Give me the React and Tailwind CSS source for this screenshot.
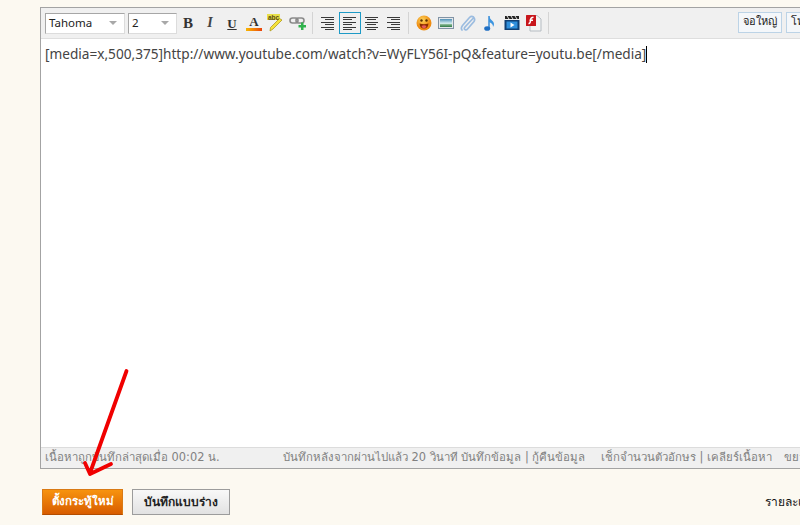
const F = { fontFamily: '"DejaVu Sans", "Noto Sans", sans-serif' };
const S = { fontFamily: '"Liberation Serif", serif' };
const N = { fontFamily: '"Noto Sans", "DejaVu Sans", sans-serif' };

function Cell({ children, active }) {
  return (
    <div className={`w-[22px] h-[22px] shrink-0 flex items-center justify-center ${active ? "border border-[#1e9ac6]" : ""}`}>
      {children}
    </div>
  );
}
const Sep = () => <div className="w-px h-[22px] bg-[#d4d4d4] mx-[3px] shrink-0" />;

function Align({ mode }) {
  return (
    <svg width="14" height="14" viewBox="0 0 14 14">
      {[1, 3, 6, 8, 11, 13].map((y, i) => {
        const w = i % 2 ? 9 : 13;
        const x = mode === "left" ? 0 : mode === "center" ? Math.floor((14 - w) / 2) : 13 - w;
        return <rect key={y} x={x} y={y} width={w} height="1" fill="#3a3a3a" />;
      })}
    </svg>
  );
}

function Select({ w, label }) {
  return (
    <div style={N} className={`${w} h-[21px] bg-white border border-[#a6a6a6] border-r-[#dcdcdc] border-b-[#dcdcdc] flex items-center justify-between pl-[3px] pr-[7px] text-[11.5px] text-[#222] shrink-0`}>
      <span>{label}</span>
      <span className="w-0 h-0 border-x-[4px] border-x-transparent border-t-[4px] border-t-[#a8a8a8]" />
    </div>
  );
}

export default function App() {
  return (
    <div style={F} className="relative w-[800px] h-[525px] overflow-hidden bg-[#fcf9f1]">
      <div className="w-[800px] pl-10 pt-[7px]">
        <div className="w-[800px] h-[462px] flex flex-col border-t border-l border-b border-[#a3a3a3]">
          <div className="h-[31px] shrink-0 bg-[#f0f0f0] border-b border-[#dedede] flex items-center pl-1 relative">
            <div className="flex items-center gap-[3px] shrink-0">
              <Select w="w-[80px]" label="Tahoma" />
              <Select w="w-[49px]" label="2" />
            </div>
            <div className="flex items-center shrink-0">
              <Cell><span style={S} className="text-[15px] font-bold leading-none text-[#333]">B</span></Cell>
              <Cell><span style={S} className="text-[14px] italic font-bold leading-none text-[#444]">I</span></Cell>
              <Cell><span style={S} className="text-[13px] font-bold underline leading-none text-[#333]">U</span></Cell>
              <Cell>
                <div className="flex flex-col items-center">
                  <span style={S} className="text-[13px] font-bold leading-[11px] text-[#333]">A</span>
                  <span className="w-4 h-[3px] mt-px bg-gradient-to-r from-[#f7b500] to-[#e8400c]" />
                </div>
              </Cell>
              <Cell>
                <svg width="18" height="18" viewBox="0 0 18 18">
                  <rect x="0" y="0" width="13" height="6" fill="#e8e04a" />
                  <path d="M15 6 L6 15 L3 17 L3.5 13.5 L12.5 4.5 Z" fill="#f5e23a" stroke="#b09b20" strokeWidth="0.8" />
                  <text x="1" y="5.5" fontSize="6.5" fontWeight="bold" fill="#5a4b10" fontFamily="Liberation Sans">abc</text>
                </svg>
              </Cell>
              <Cell>
                <svg width="18" height="14" viewBox="0 0 18 14">
                  <rect x="1" y="2" width="8" height="5" rx="2.5" fill="none" stroke="#8a8a8a" strokeWidth="1.6" />
                  <rect x="7" y="2" width="8" height="5" rx="2.5" fill="none" stroke="#8a8a8a" strokeWidth="1.6" />
                  <path d="M12 6.5h2.5V9H17v2.5h-2.5V14H12v-2.5H9.5V9H12z" fill="#2fb24c" />
                </svg>
              </Cell>
              <Sep />
              <div className="w-px" />
              <Cell><Align mode="right" /></Cell>
              <Cell active><Align mode="left" /></Cell>
              <Cell><Align mode="center" /></Cell>
              <Cell><Align mode="right" /></Cell>
              <Sep />
              <div className="w-px" />
              <Cell>
                <svg width="16" height="16" viewBox="0 0 16 16">
                  <defs><radialGradient id="sm" cx="0.4" cy="0.3"><stop offset="0" stopColor="#fdd35a" /><stop offset="1" stopColor="#ee8c12" /></radialGradient></defs>
                  <circle cx="8" cy="8" r="7.5" fill="url(#sm)" />
                  <circle cx="5.5" cy="5.5" r="1.2" fill="#5a3000" />
                  <circle cx="10.5" cy="5.5" r="1.2" fill="#5a3000" />
                  <path d="M3.5 8.5 Q8 10 12.5 8.5 Q12 13.5 8 13.5 Q4 13.5 3.5 8.5Z" fill="#8c2c00" />
                  <path d="M5.5 11 Q8 9.5 10.5 11 Q9.5 13.5 8 13.5 Q6.5 13.5 5.5 11Z" fill="#e85a5a" />
                </svg>
              </Cell>
              <Cell>
                <svg width="16" height="12" viewBox="0 0 16 12">
                  <defs><linearGradient id="im" x1="0" y1="0" x2="0" y2="1"><stop offset="0" stopColor="#4f8fb5" /><stop offset="0.55" stopColor="#d5eef2" /><stop offset="0.7" stopColor="#7fb28c" /><stop offset="1" stopColor="#2f7a46" /></linearGradient></defs>
                  <rect x="0.5" y="0.5" width="15" height="11" fill="#e4e8ec" stroke="#8193a5" />
                  <rect x="2" y="2" width="12" height="8" fill="url(#im)" />
                </svg>
              </Cell>
              <Cell>
                <svg width="16" height="17" viewBox="0 0 16 17">
                  <path d="M13 3.5 L5 12 Q3.5 14 5.2 14.8 Q6.5 15.3 7.5 14 L14 6.5 Q15.5 4 13.5 2 Q11.5 0.5 9.5 2.5 L2.5 10.5 Q0.5 13 2 15" fill="none" stroke="#9bbce0" strokeWidth="1.7" strokeLinecap="round" />
                </svg>
              </Cell>
              <Cell>
                <svg width="12" height="17" viewBox="0 0 12 17">
                  <path d="M5 1 V13" stroke="#2e86d6" strokeWidth="1.4" fill="none" />
                  <ellipse cx="3.2" cy="13.5" rx="3" ry="2.3" fill="#1f6fc4" />
                  <path d="M5 1 Q6 4.5 9 6.5 Q11 9 9 12 Q9.3 8.5 5 7 Z" fill="#3d95e0" />
                </svg>
              </Cell>
              <Cell>
                <svg width="16" height="16" viewBox="0 0 16 16">
                  <rect x="1" y="1" width="14" height="3" fill="#222" />
                  <path d="M3 1 L5 4 M7 1 L9 4 M11 1 L13 4" stroke="#ddd" strokeWidth="1" />
                  <rect x="0.5" y="5" width="15" height="10" fill="#0f3f75" />
                  <rect x="2.5" y="6.5" width="11" height="7" fill="#2f8fdc" />
                  <path d="M6.5 7.5 L10.5 10 L6.5 12.5Z" fill="#fff" />
                </svg>
              </Cell>
              <Cell>
                <svg width="16" height="18" viewBox="0 0 16 18">
                  <path d="M4 1.5 H11 L15 5 V17 H4 Z" fill="#f4f4f4" stroke="#b5bcc2" />
                  <rect x="0" y="1" width="10" height="11" fill="#c8161c" rx="0.5" />
                  <path d="M7.5 3.2 Q4.5 3.2 4.5 6.5 Q4.5 9.5 2.5 9.8 M3.5 6.2 H7" fill="none" stroke="#fff" strokeWidth="1.4" />
                </svg>
              </Cell>
              <Sep />
            </div>
            <div className="absolute left-[697px] top-[4px] flex gap-1">
              <span className="h-[21px] w-[44px] flex items-center justify-center border border-[#bcd3e6] bg-[#f4f7fa] text-[11px] text-[#222] shrink-0">จอใหญ่</span>
              <span className="h-[21px] w-[44px] flex items-center pl-1 border border-[#bcd3e6] bg-[#f4f7fa] text-[11px] text-[#222] shrink-0">โหมด</span>
            </div>
          </div>
          <div style={N} className="flex-1 bg-white px-1 pt-[5px] text-[13.63px] leading-[20px] text-[#444]">
            <span>[media=x,500,375]http://www.youtube.com/watch?v=WyFLY56I-pQ&amp;feature=youtu.be[/media]</span>
            <span className="inline-block w-px h-[17px] bg-black align-text-bottom" />
          </div>
          <div className="h-[21px] shrink-0 bg-[#f0f0f0] border-t border-[#dcdcdc] flex items-center pl-1 text-[11.4px] text-[#808080] whitespace-nowrap">
            <span className="w-[238px] shrink-0">เนื้อหาถูกบันทึกล่าสุดเมื่อ 00:02 น.</span>
            <span className="w-[318px] shrink-0">บันทึกหลังจากผ่านไปแล้ว 20 วินาที บันทึกข้อมูล | กู้คืนข้อมูล</span>
            <span className="w-[183px] shrink-0">เช็กจำนวนตัวอักษร | เคลียร์เนื้อหา</span>
            <span>ขยายขนาด</span>
          </div>
        </div>
      </div>
      <div className="flex items-center pl-[42px] pt-5 gap-[9px]">
        <button className="w-[81px] h-[26px] shrink-0 text-[11.5px] font-bold text-white border border-[#d97a14] border-b-[#b34d00] bg-gradient-to-b from-[#f7930f] to-[#d85c00] whitespace-nowrap">ตั้งกระทู้ใหม่</button>
        <button className="w-[98px] h-[26px] shrink-0 text-[12px] font-bold text-[#222] border border-[#9c9c9c] bg-gradient-to-b from-[#f8f8f8] to-[#e2e2e2] whitespace-nowrap">บันทึกแบบร่าง</button>
        <span className="ml-[526px] shrink-0 text-[12px] text-[#111] whitespace-nowrap">รายละเอียด</span>
      </div>
      <svg className="absolute left-0 top-0 pointer-events-none" width="800" height="525" viewBox="0 0 800 525">
        <path d="M126.5 371 L90 473 M85 463 L90 474 L111 464" fill="none" stroke="#f00000" strokeWidth="3.8" strokeLinecap="round" strokeLinejoin="round" />
      </svg>
    </div>
  );
}
